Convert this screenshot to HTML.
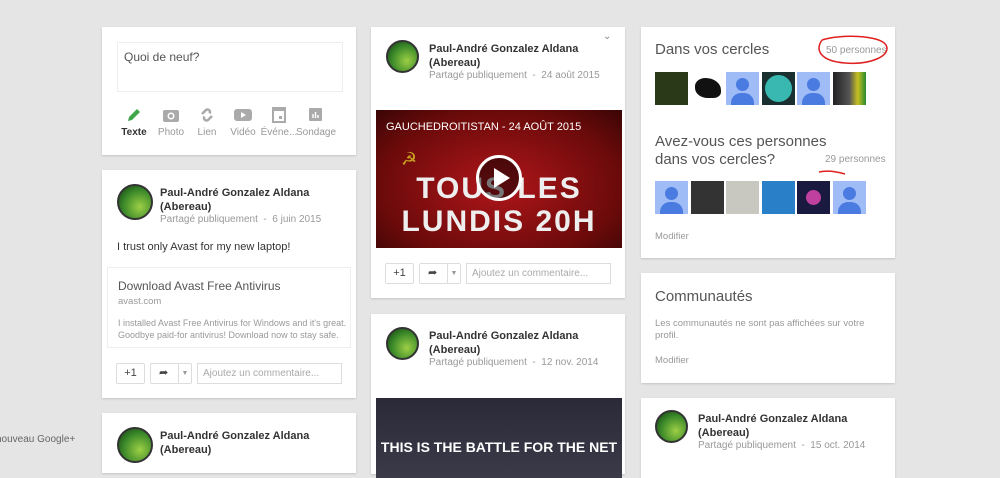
<!DOCTYPE html>
<html><head><meta charset="utf-8"><style>
*{margin:0;padding:0;box-sizing:border-box}
body{width:1000px;height:455px;overflow:hidden;background:#e5e5e5;font-family:"Liberation Sans",Arial,sans-serif;position:relative;color:#404040}
.card{position:absolute;background:#fff;box-shadow:0 1px 2px rgba(0,0,0,.15)}
.abs{position:absolute}
.av{position:absolute;width:36px;height:36px;border-radius:50%;border:2px solid #333;background:radial-gradient(circle at 65% 65%,#9ccf45,#3c8a2a 55%,#0f3a10)}
.name{position:absolute;font-size:11px;font-weight:bold;color:#333;line-height:14px}
.meta{position:absolute;font-size:10px;color:#999}
.btn{position:absolute;height:21px;border:1px solid #ddd;border-radius:2px;background:#fff;font-size:11px;color:#444;text-align:center;line-height:19px}
.cm{position:absolute;height:21px;border:1px solid #ddd;font-size:10px;color:#aaa;line-height:19px;padding-left:5px}
.sq{position:absolute;width:33px;height:33px}
.person{background:#9fbcf7;overflow:hidden}
.person:before{content:"";position:absolute;left:10px;top:6px;width:13px;height:13px;border-radius:50%;background:#4a7be0}
.person:after{content:"";position:absolute;left:5px;top:21px;width:23px;height:16px;border-radius:10px 10px 0 0;background:#4a7be0}
.ic{position:absolute;font-size:10px;color:#999;text-align:center;width:40px}
</style></head><body>

<div class="card" style="left:102px;top:27px;width:254px;height:128px">
 <div class="abs" style="left:15px;top:15px;width:226px;height:50px;border:1px solid #eee;background:#fff;font-size:12px;color:#555;padding:7px 6px">Quoi de neuf?</div>
 <svg class="abs" style="left:24px;top:80px" width="16" height="16" viewBox="0 0 16 16"><path d="M2 14l1-4 8-8 3 3-8 8z" fill="#3fa64a"/></svg>
 <div class="ic" style="left:12px;top:100px;color:#333;font-weight:bold">Texte</div>
 <svg class="abs" style="left:61px;top:81px" width="16" height="14"><rect x="0" y="2" width="16" height="12" rx="2" fill="#aaa"/><circle cx="8" cy="8" r="3.5" fill="#fff"/><circle cx="8" cy="8" r="2" fill="#aaa"/></svg>
 <div class="ic" style="left:49px;top:100px">Photo</div>
 <svg class="abs" style="left:97px;top:80px" width="16" height="16"><path d="M3 7l4-4a2.5 2.5 0 013.5 3.5M13 9l-4 4a2.5 2.5 0 01-3.5-3.5" stroke="#aaa" stroke-width="2.5" fill="none"/></svg>
 <div class="ic" style="left:85px;top:100px">Lien</div>
 <svg class="abs" style="left:132px;top:82px" width="18" height="12"><rect width="18" height="12" rx="3" fill="#aaa"/><path d="M7 3l5 3-5 3z" fill="#fff"/></svg>
 <div class="ic" style="left:121px;top:100px">Vidéo</div>
 <svg class="abs" style="left:170px;top:80px" width="14" height="16"><rect x="1" y="1" width="12" height="14" fill="none" stroke="#aaa" stroke-width="2"/><rect x="1" y="1" width="12" height="3" fill="#aaa"/><rect x="7" y="9" width="3" height="3" fill="#aaa"/></svg>
 <div class="ic" style="left:157px;top:100px">Événe...</div>
 <svg class="abs" style="left:207px;top:81px" width="13" height="13"><rect width="13" height="13" rx="1" fill="#aaa"/><path d="M4 10V6M6.5 10V4M9 10V7" stroke="#fff" stroke-width="1.4"/></svg>
 <div class="ic" style="left:192px;top:100px;width:44px">Sondage</div>
</div>

<div class="card" style="left:102px;top:170px;width:254px;height:228px">
 <div class="av" style="left:15px;top:14px"></div>
 <div class="name" style="left:58px;top:16px">Paul-André Gonzalez Aldana<br>(Abereau)</div>
 <div class="meta" style="left:58px;top:44px">Partagé publiquement &nbsp;-&nbsp; 6 juin 2015</div>
 <div class="abs" style="left:15px;top:71px;font-size:11px;color:#333">I trust only Avast for my new laptop!</div>
 <div class="abs" style="left:5px;top:97px;width:244px;height:81px;border:1px solid #eee">
  <div class="abs" style="left:10px;top:11px;font-size:12px;color:#555">Download Avast Free Antivirus</div>
  <div class="abs" style="left:10px;top:28px;font-size:9.5px;color:#999">avast.com</div>
  <div class="abs" style="left:10px;top:49px;font-size:9px;color:#999;line-height:12px;width:230px">I installed Avast Free Antivirus for Windows and it's great. Goodbye paid-for antivirus! Download now to stay safe.</div>
 </div>
 <div class="btn" style="left:14px;top:193px;width:29px">+1</div>
 <div class="btn" style="left:48px;top:193px;width:42px;text-align:left;padding-left:8px">➦<span style="position:absolute;left:27px;top:0;height:19px;border-left:1px solid #ddd;width:13px;font-size:7px;color:#999;text-align:center">▼</span></div>
 <div class="cm" style="left:95px;top:193px;width:145px">Ajoutez un commentaire...</div>
</div>

<div class="card" style="left:102px;top:413px;width:254px;height:60px">
 <div class="av" style="left:15px;top:14px"></div>
 <div class="name" style="left:58px;top:16px">Paul-André Gonzalez Aldana<br>(Abereau)</div>
</div>
<div class="abs" style="left:-4px;top:434px;font-size:10px;color:#666">nouveau Google+</div>

<div class="card" style="left:371px;top:27px;width:254px;height:271px">
 <div class="av" style="left:15px;top:13px;width:33px;height:33px"></div>
 <div class="name" style="left:58px;top:15px">Paul-André Gonzalez Aldana<br>(Abereau)</div>
 <div class="meta" style="left:58px;top:43px">Partagé publiquement &nbsp;-&nbsp; 24 août 2015</div>
 <div class="abs" style="left:232px;top:4px;font-size:10px;color:#888">⌄</div>
 <div class="abs" style="left:5px;top:83px;width:246px;height:138px;background:radial-gradient(ellipse at 50% 55%,#b0161a,#6a0a0a 70%,#3a0505);overflow:hidden">
  <div class="abs" style="left:10px;top:11px;font-size:11px;color:#fff">GAUCHEDROITISTAN - 24 AOÛT 2015</div>
  <div class="abs" style="left:25px;top:39px;font-size:18px;color:#c9a020">☭</div>
  <div class="abs" style="left:0;top:62px;width:246px;text-align:center;font-size:30px;font-weight:bold;color:#eee;line-height:33px;letter-spacing:2px">TOUS LES<br>LUNDIS 20H</div>
  <div class="abs" style="left:100px;top:45px;width:46px;height:46px;border-radius:50%;border:3px solid #fff;background:rgba(0,0,0,.5)"><div class="abs" style="left:15px;top:10px;border-left:16px solid #fff;border-top:10px solid transparent;border-bottom:10px solid transparent"></div></div>
 </div>
 <div class="btn" style="left:14px;top:236px;width:29px">+1</div>
 <div class="btn" style="left:48px;top:236px;width:42px;text-align:left;padding-left:8px">➦<span style="position:absolute;left:27px;top:0;height:19px;border-left:1px solid #ddd;width:13px;font-size:7px;color:#999;text-align:center">▼</span></div>
 <div class="cm" style="left:95px;top:236px;width:145px">Ajoutez un commentaire...</div>
</div>

<div class="card" style="left:371px;top:314px;width:254px;height:160px">
 <div class="av" style="left:15px;top:13px;width:33px;height:33px"></div>
 <div class="name" style="left:58px;top:15px">Paul-André Gonzalez Aldana<br>(Abereau)</div>
 <div class="meta" style="left:58px;top:43px">Partagé publiquement &nbsp;-&nbsp; 12 nov. 2014</div>
 <div class="abs" style="left:5px;top:84px;width:246px;height:80px;background:linear-gradient(#2a2a38,#3a3a48);overflow:hidden">
  <div class="abs" style="left:0;top:41px;width:246px;text-align:center;font-size:14px;font-weight:bold;color:#fff">THIS IS THE BATTLE FOR THE NET</div>
 </div>
</div>

<div class="card" style="left:641px;top:27px;width:254px;height:231px">
 <div class="abs" style="left:14px;top:14px;font-size:15px;color:#555">Dans vos cercles</div>
 <div class="abs" style="left:185px;top:18px;font-size:10px;color:#999">50 personnes</div>
 <div class="sq" style="left:14px;top:45px;background:#2a3a18"></div>
 <div class="sq" style="left:50px;top:45px;background:#fff"><div class="abs" style="left:4px;top:6px;width:26px;height:20px;background:#111;border-radius:40% 60% 30% 50%"></div></div>
 <div class="sq person" style="left:85px;top:45px"></div>
 <div class="sq" style="left:121px;top:45px;background:#1a3030"><div class="abs" style="left:3px;top:3px;width:27px;height:27px;border-radius:50%;background:#38b8b0"></div></div>
 <div class="sq person" style="left:156px;top:45px"></div>
 <div class="sq" style="left:192px;top:45px;background:linear-gradient(90deg,#222,#555 50%,#c8c020 75%,#2a8a30)"></div>
 <div class="abs" style="left:14px;top:106px;font-size:15px;color:#555;line-height:18px">Avez-vous ces personnes<br>dans vos cercles?</div>
 <div class="abs" style="left:184px;top:127px;font-size:10px;color:#999">29 personnes</div>
 <div class="sq person" style="left:14px;top:154px"></div>
 <div class="sq" style="left:50px;top:154px;background:#333"></div>
 <div class="sq" style="left:85px;top:154px;background:#c8c8c0"></div>
 <div class="sq" style="left:121px;top:154px;background:#2a80c8"></div>
 <div class="sq" style="left:156px;top:154px;background:#1a1a40"><div class="abs" style="left:9px;top:9px;width:15px;height:15px;border-radius:50%;background:#c040a0"></div></div>
 <div class="sq person" style="left:192px;top:154px"></div>
 <div class="abs" style="left:14px;top:204px;font-size:9.5px;color:#999">Modifier</div>
</div>

<div class="card" style="left:641px;top:273px;width:254px;height:110px">
 <div class="abs" style="left:14px;top:15px;font-size:15px;color:#555">Communautés</div>
 <div class="abs" style="left:14px;top:45px;font-size:9.5px;color:#999;line-height:12px;width:220px">Les communautés ne sont pas affichées sur votre profil.</div>
 <div class="abs" style="left:14px;top:82px;font-size:9.5px;color:#999">Modifier</div>
</div>

<div class="card" style="left:641px;top:398px;width:254px;height:80px">
 <div class="av" style="left:14px;top:12px;width:33px;height:33px"></div>
 <div class="name" style="left:57px;top:14px">Paul-André Gonzalez Aldana<br>(Abereau)</div>
 <div class="meta" style="left:57px;top:42px">Partagé publiquement &nbsp;-&nbsp; 15 oct. 2014</div>
</div>

<svg class="abs" style="left:0;top:0" width="1000" height="455">
 <path d="M822 40 C840 34,880 35,886 45 C892 56,870 65,845 63 C820 61,815 50,822 40" fill="none" stroke="#e02020" stroke-width="1.5"/>
 <path d="M819 172 C828 170,838 172,845 174" fill="none" stroke="#e02020" stroke-width="1.5"/>
</svg>
</body></html>
